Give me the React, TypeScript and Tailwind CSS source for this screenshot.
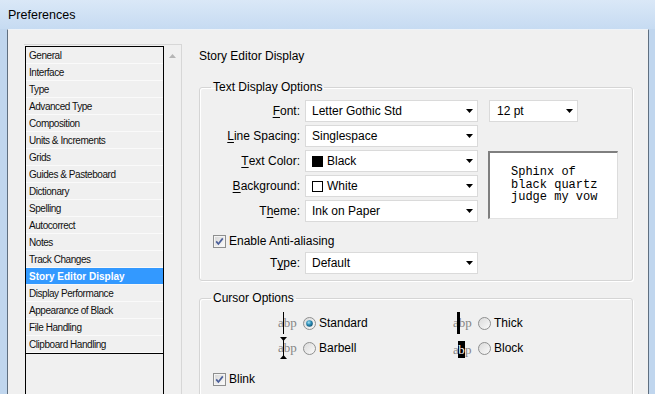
import type { ReactNode } from "react";

const items = [
  "General",
  "Interface",
  "Type",
  "Advanced Type",
  "Composition",
  "Units & Increments",
  "Grids",
  "Guides & Pasteboard",
  "Dictionary",
  "Spelling",
  "Autocorrect",
  "Notes",
  "Track Changes",
  "Story Editor Display",
  "Display Performance",
  "Appearance of Black",
  "File Handling",
  "Clipboard Handling",
];

function Caret() {
  return (
    <svg width="7" height="4" viewBox="0 0 7 4" aria-hidden>
      <path d="M0 0h7L3.5 4z" fill="#000" />
    </svg>
  );
}

function Select({ children, className }: { children: ReactNode; className?: string }) {
  return (
    <div
      className={`flex h-[22px] items-center justify-between border border-[#dadada] bg-white pl-[6px] pr-[4px] text-[12px] ${className ?? ""}`}
    >
      <span className="flex items-center gap-[4px] whitespace-nowrap">{children}</span>
      <Caret />
    </div>
  );
}

function Label({ children }: { children: ReactNode }) {
  return <span className="flex h-[22px] items-center justify-end pr-[5px] text-[12px] whitespace-nowrap">{children}</span>;
}

function CheckBox() {
  return (
    <svg width="13" height="13" viewBox="0 0 13 13" aria-hidden>
      <defs>
        <linearGradient id="cbFill" x1="0" y1="0" x2="1" y2="1">
          <stop offset="0" stopColor="#d8d8d8" />
          <stop offset="1" stopColor="#fafafa" />
        </linearGradient>
      </defs>
      <rect x="0.5" y="0.5" width="12" height="12" fill="#f4f4f4" stroke="#8e8f8f" />
      <rect x="2" y="2" width="9" height="9" fill="url(#cbFill)" />
      <path d="M3.2 6.4 5.4 9 9.8 3.4" fill="none" stroke="#4b5f9a" strokeWidth="1.7" />
    </svg>
  );
}

function Radio({ checked }: { checked?: boolean }) {
  return (
    <svg width="13" height="13" viewBox="0 0 13 13" aria-hidden>
      <defs>
        <linearGradient id="rbFill" x1="0" y1="0" x2="1" y2="1">
          <stop offset="0" stopColor="#d9d9d9" />
          <stop offset="1" stopColor="#fbfbfb" />
        </linearGradient>
        <radialGradient id="rbDot" cx="0.4" cy="0.35" r="0.7">
          <stop offset="0" stopColor="#a8e4f6" />
          <stop offset="0.5" stopColor="#2a8cb6" />
          <stop offset="1" stopColor="#10506f" />
        </radialGradient>
      </defs>
      <circle cx="6.5" cy="6.5" r="6" fill="url(#rbFill)" stroke="#8e8f8f" />
      {checked && <circle cx="6.5" cy="6.5" r="3.3" fill="url(#rbDot)" />}
    </svg>
  );
}

type CursorKind = "standard" | "barbell" | "thick" | "block";

function CursorIcon({ kind }: { kind: CursorKind }) {
  const serif = "font-['Liberation_Serif',serif] text-[13px] leading-[14px] text-[#858585]";
  return (
    <span className="relative inline-block h-[22px] w-[20px] shrink-0">
      {kind === "block" ? (
        <span className={`absolute left-0 top-[4px] flex items-center ${serif}`}>
          <span className="w-[5px] overflow-hidden">a</span>
          <span className="flex h-[17px] w-[7px] items-center justify-center bg-black text-white">b</span>
          <span>p</span>
        </span>
      ) : (
        <span className={`absolute left-0 top-[4px] ${serif}`}>abp</span>
      )}
      {kind === "standard" && <span className="absolute left-[5px] top-0 h-[22px] w-[1px] bg-black" />}
      {kind === "thick" && <span className="absolute left-[4px] top-0 h-[22px] w-[3px] bg-black" />}
      {kind === "barbell" && (
        <svg className="absolute left-[1px] top-0" width="9" height="22" viewBox="0 0 9 22" aria-hidden>
          <path d="M4.5 0v22" stroke="#000" strokeWidth="1" />
          <path d="M1 0h7L4.5 4z M1 22h7L4.5 18z" fill="#000" />
        </svg>
      )}
    </span>
  );
}

function CursorOption({ kind, label, checked }: { kind: CursorKind; label: string; checked?: boolean }) {
  return (
    <div className="flex h-[22px] items-center">
      <CursorIcon kind={kind} />
      <span className="ml-[5px] flex">
        <Radio checked={checked} />
      </span>
      <span className="ml-[3px] text-[12px]">{label}</span>
    </div>
  );
}

function Group({ title, children, className }: { title: string; children: ReactNode; className?: string }) {
  return (
    <fieldset
      className={`rounded-[3px] border border-[#d5d5d5] shadow-[inset_1px_1px_0_#fff,1px_1px_0_#fff] ${className ?? ""}`}
    >
      <legend className="ml-[11px] px-[2px] text-[12px] leading-[14px]">{title}</legend>
      {children}
    </fieldset>
  );
}

export default function App() {
  return (
    <div className="flex h-[394px] w-[655px] flex-col overflow-hidden bg-[#c0d6ee] font-['Liberation_Sans',Arial,sans-serif] text-black">
      <div className="flex h-[29px] shrink-0 items-center bg-gradient-to-b from-[#dae8f7] to-[#c6dbf2] pl-[8px] pt-[2px] text-[12.5px]">
        Preferences
      </div>

      <div className="flex min-h-0 flex-1 pl-[7px] pr-[6px]">
        <div className="flex min-w-0 flex-1 border-l border-r border-t border-l-[#5f6f80] border-r-[#5f6f80] border-t-[#eef3f8] bg-[#f0f0f0] pl-[16px] pt-[14px]">
          {/* left: category list */}
          <div className="flex w-[158px] shrink-0 border-r border-t border-[#d7d7d7] pt-[1px]">
            <div className="ml-[1px] flex w-[139px] flex-col border-l border-r border-t border-black">
              {items.map((it) => {
                const sel = it === "Story Editor Display";
                return (
                  <div
                    key={it}
                    className={`flex h-[17px] items-center border-b pl-[3px] text-[10px] ${
                      sel
                        ? "border-[#f7f7f7] bg-[#3399ff] font-bold text-white"
                        : "border-[#fafafa] tracking-[-0.45px] text-[#111]"
                    }`}
                  >
                    {it}
                  </div>
                );
              })}
              <div className="flex-1 border-t border-black" />
            </div>
            <div className="flex flex-1 justify-center pt-[8px]">
              <svg width="7" height="4" viewBox="0 0 7 4" aria-hidden>
                <path d="M0 4h7L3.5 0z" fill="#b5b5b5" />
              </svg>
            </div>
          </div>

          {/* right: settings */}
          <div className="ml-[15px] flex min-w-0 flex-1 flex-col pr-[14px] pt-[5px]">
            <div className="pl-[2px] text-[12px] leading-[15px]">Story Editor Display</div>
            <div className="h-[1px] bg-[#a0a0a0]" />
            <div className="h-[1px] bg-white" />

            <Group title="Text Display Options" className="ml-[2px] mr-[1px] mt-[16px] pb-[6px]">
              <div className="mt-[6px] grid grid-cols-[105px_173px_1fr] gap-y-[3px]">
                <Label>
                  <u className="underline-offset-2">F</u>ont:
                </Label>
                <Select>Letter Gothic Std</Select>
                <div className="pl-[11px]">
                  <Select className="w-[89px] pl-[7px]">12 pt</Select>
                </div>

                <Label>
                  <u className="underline-offset-2">L</u>ine Spacing:
                </Label>
                <Select>Singlespace</Select>
                <div />

                <Label>
                  <u className="underline-offset-2">T</u>ext Color:
                </Label>
                <Select className="pl-[2px]">
                  <span className="h-[11px] w-[11px] bg-black" />
                  Black
                </Select>
                <div className="row-span-3 pl-[10px] pt-[1px]">
                  <div className="h-[68px] w-[130px] border-b border-l-2 border-r border-t-2 border-b-[#e2e2e2] border-l-[#7f7f7f] border-r-[#dcdcdc] border-t-[#7f7f7f] bg-white pl-[21px] pt-[13px] font-['Liberation_Mono',monospace] text-[12px] leading-[12.5px]">
                    <div>Sphinx of</div>
                    <div>black quartz</div>
                    <div>judge my vow</div>
                  </div>
                </div>

                <Label>
                  <u className="underline-offset-2">B</u>ackground:
                </Label>
                <Select className="pl-[2px]">
                  <span className="h-[11px] w-[11px] border border-black bg-white" />
                  White
                </Select>

                <Label>
                  T<u className="underline-offset-2">h</u>eme:
                </Label>
                <Select>Ink on Paper</Select>
              </div>

              <div className="mt-[13px] flex items-center pl-[13px]">
                <CheckBox />
                <span className="ml-[3px] text-[12px] leading-[13px]">Enable Anti-aliasing</span>
              </div>

              <div className="mt-[4px] grid grid-cols-[105px_173px]">
                <Label>
                  T<u className="underline-offset-2">y</u>pe:
                </Label>
                <Select>Default</Select>
              </div>
            </Group>

            <Group title="Cursor Options" className="ml-[2px] mr-[1px] mt-[10px] pb-[40px]">
              <div className="mt-[7px] grid grid-cols-[175px_175px] gap-y-[3px] pl-[78px]">
                <CursorOption kind="standard" label="Standard" checked />
                <CursorOption kind="thick" label="Thick" />
                <CursorOption kind="barbell" label="Barbell" />
                <CursorOption kind="block" label="Block" />
              </div>
              <div className="mt-[14px] flex items-center pl-[13px]">
                <CheckBox />
                <span className="ml-[3px] text-[12px] leading-[13px]">Blink</span>
              </div>
            </Group>
          </div>
        </div>
      </div>
    </div>
  );
}
